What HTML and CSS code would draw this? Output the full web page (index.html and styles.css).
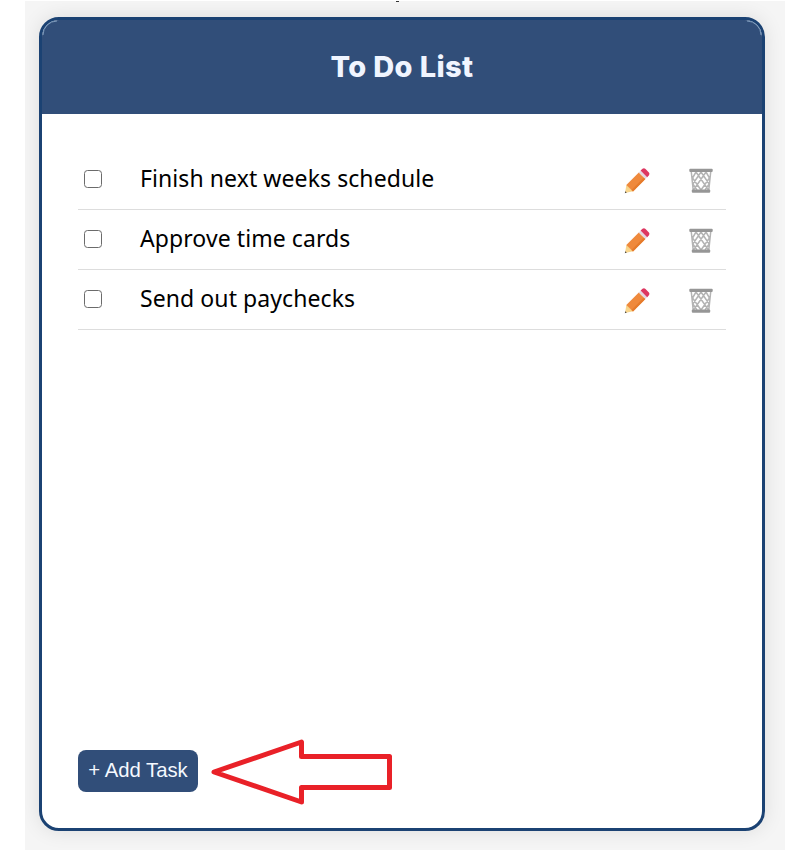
FILE: index.html
```
<!DOCTYPE html>
<html lang="en">
<head>
<meta charset="utf-8">
<title>To Do List</title>
<link rel="stylesheet" href="styles.css">
</head>
<body>
<svg class="defs" width="0" height="0" aria-hidden="true">
  <symbol id="pencil" viewBox="0 0 26 26">
    <path fill="#f8d58c" d="M2.4 16.800 9.200 23.200 1 25Z"/>
    <path fill="#444" d="M1.300 23.200 2.800 24.600 .8 25.200Z"/>
    <path fill="#ef893c" d="M2.300 16.900 14.800 4.400 21.400 11 9 23.400Z"/>
    <path fill="#e57b2c" d="M7.500 21.900 19.900 9.500 21.400 11 9 23.400Z"/>
    <path fill="#e5d5df" d="M14.800 4.400 16.800 2.400 23.400 9 21.400 11Z"/>
    <path fill="#dd3660" d="M16.600 2.600 18.500.8Q20 -.3 21.500 1L24.700 4.200Q26 5.500 24.900 7.200L23.200 9.200Z"/>
  </symbol>
  <symbol id="bin" viewBox="0 0 24 26">
    <path fill="#fff" d="M1.500 3H22.500L20.500 23H3.500Z"/>
    <path fill="none" stroke="#b4b4b4" stroke-width="1.500" d="M2.300 4 4.200 22M21.700 4 19.800 22M7 4 3.500 10 12 22M12 4 3.800 16 8 22M7 4 19.500 22M12 4 20.200 16 16 22M17 4 4.500 22M17 4 20.500 10 12 22"/>
    <rect x=".3" y=".8" width="23.4" height="3.2" rx="1" fill="#969696"/>
    <rect x="2.800" y="21.6" width="18.4" height="3.2" rx="1" fill="#969696"/>
  </symbol>
</svg>
<div class="page">
  <span class="speck"></span>
  <main class="card">
    <header class="header"><h1>To Do List</h1>
      <svg class="glint left" viewBox="0 0 16 16"><path d="M1 15A14 14 0 0 1 15 1"/></svg>
      <svg class="glint right" viewBox="0 0 16 16"><path d="M1 1A14 14 0 0 1 15 15"/></svg>
    </header>
    <ul class="tasks">
      <li class="task"><span class="check"></span><span class="label">Finish next weeks schedule</span><svg class="pencil"><use href="#pencil"/></svg><svg class="bin"><use href="#bin"/></svg></li>
      <li class="task"><span class="check"></span><span class="label">Approve time cards</span><svg class="pencil"><use href="#pencil"/></svg><svg class="bin"><use href="#bin"/></svg></li>
      <li class="task"><span class="check"></span><span class="label">Send out paychecks</span><svg class="pencil"><use href="#pencil"/></svg><svg class="bin"><use href="#bin"/></svg></li>
    </ul>
    <footer class="footer">
      <button class="add">+ Add Task</button>
      <svg class="arrow" viewBox="0 0 184 68"><path d="M5 34 92.500 4V18.500H180.500V49.500H92.500V64Z"/></svg>
    </footer>
  </main>
</div>
</body>
</html>
```
FILE: styles.css
```
* { box-sizing: border-box; }
body { margin: 0; background: #fff; height: 850px; overflow: hidden; }
.defs { position: absolute; }
.page { position: relative; width: 760px; height: 849px; margin: 1px 0 0 25px; padding: 16px 20px 0 14px; background: #f5f5f5; overflow: hidden; }
.speck { position: absolute; left: 371px; top: -1px; width: 3px; height: 2px; background: #333; }
.card { display: flex; flex-direction: column; height: 814px; border: 3px solid #1b4273; border-radius: 20px; background: #fff; box-shadow: 0 0 20px rgba(0,0,0,.1); }
.header { position: relative; height: 94px; flex: none; display: flex; align-items: center; justify-content: center; background: #314e79; border-radius: 17px 17px 0 0; }
.glint { position: absolute; top: 0; width: 16px; height: 16px; fill: none; stroke: #9dbbd9; stroke-width: .7; }
.left { left: 0; }
.right { right: 0; }
h1 { margin: 0; padding-bottom: 1px; color: #f0f5ff; font: 800 29px/40px Inter, "Liberation Sans", sans-serif; letter-spacing: .4px; white-space: nowrap; }
.tasks { list-style: none; margin: 36px 36px 0; padding: 0; }
.task { display: flex; align-items: center; height: 60px; padding: 0 13px 0 6px; border-bottom: 1px solid #ddd; }
.check { width: 18px; height: 18px; border: 1px solid #6b6b6b; border-radius: 3.5px; margin: 0 38px 2px 0; }
.label { flex: 1; padding-bottom: 3px; color: #000; font: 400 23px/34px "Noto Sans", sans-serif; letter-spacing: .08px; white-space: nowrap; }
.pencil { width: 26px; height: 26px; margin: 2px 39px 0 0; }
.bin { width: 24px; height: 26px; margin-top: 2px; }
.footer { display: flex; align-items: center; margin: auto 36px 22px; }
.add { width: 120px; height: 42px; margin-bottom: 2px; padding: 0 0 2px; border: 0; border-radius: 8px; background: #314e79; color: #f5f9ff; font: 20.300px "Liberation Sans", Arial, sans-serif; white-space: nowrap; }
.arrow { width: 184px; height: 68px; margin-left: 11px; fill: none; stroke: #e92128; stroke-width: 5; stroke-linejoin: round; }
```
